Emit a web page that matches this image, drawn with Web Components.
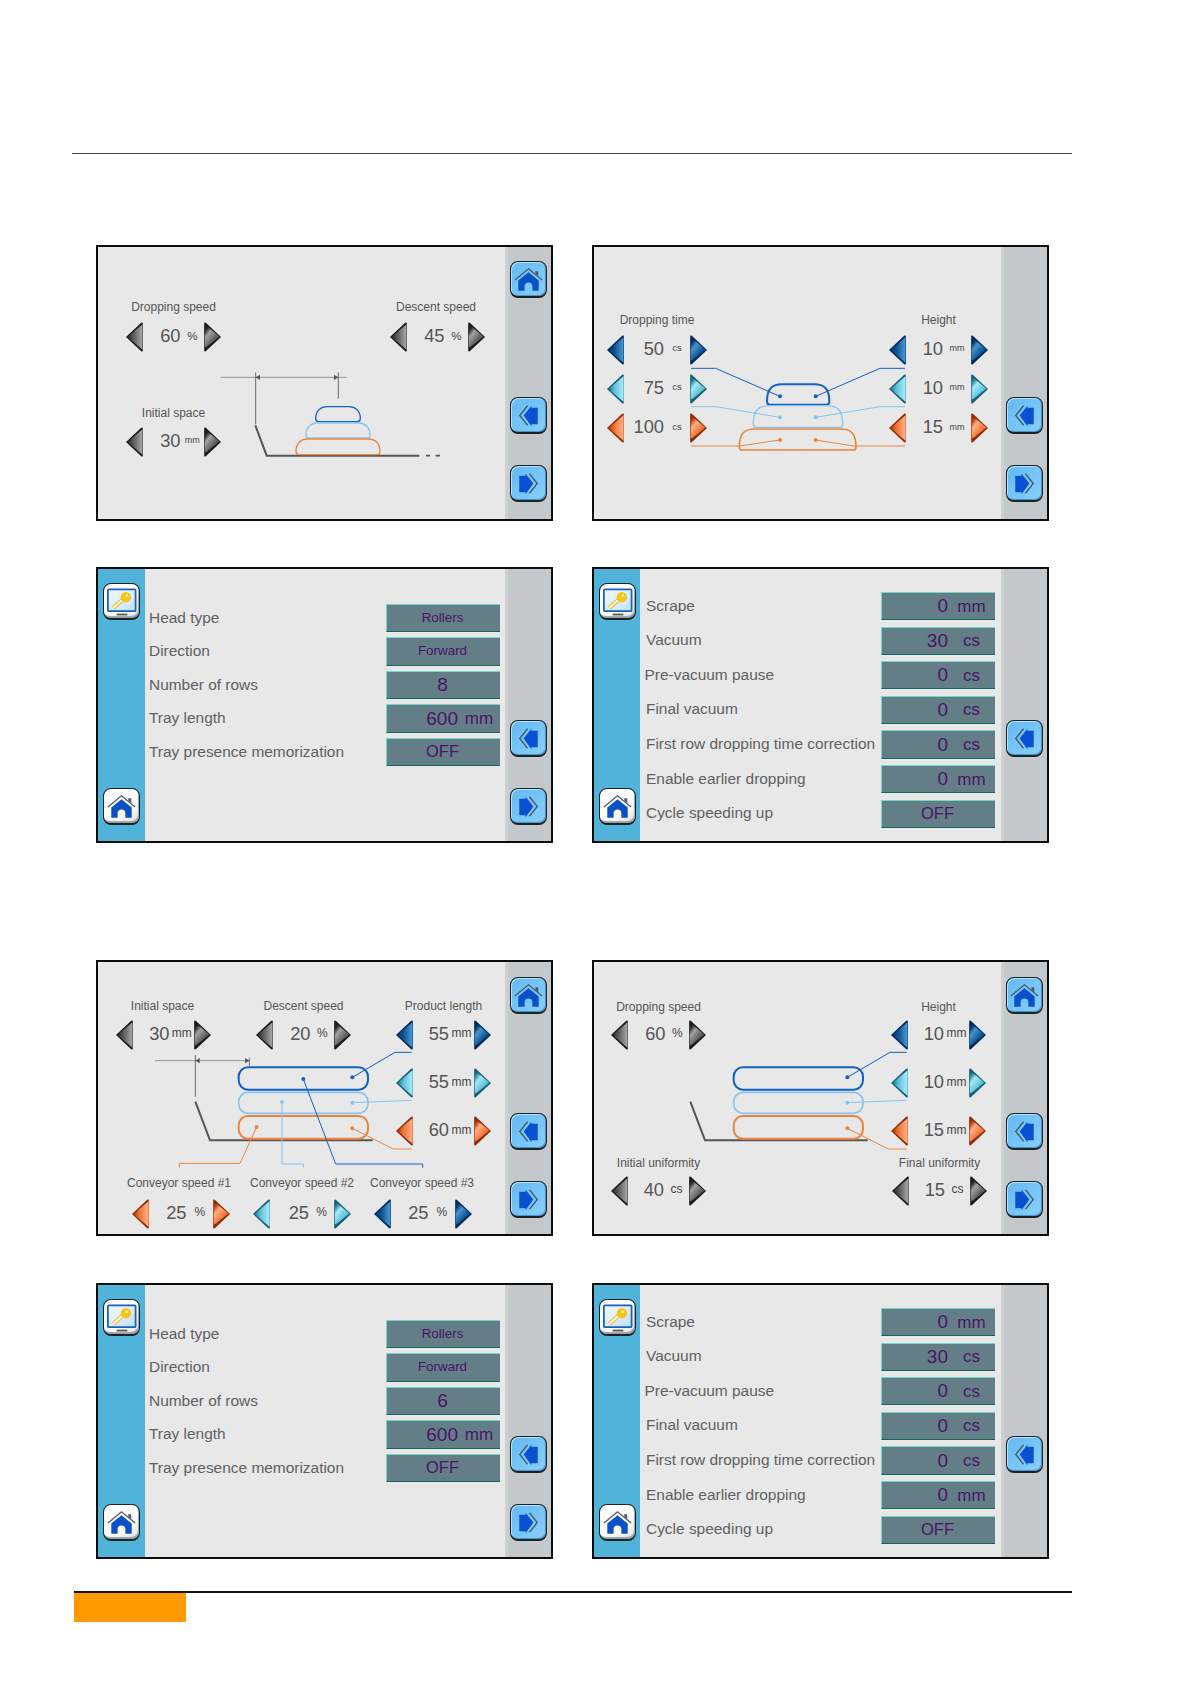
<!DOCTYPE html>
<html lang="en">
<head>
<meta charset="utf-8">
<title>Manual page</title>
<style>
  html, body { margin: 0; background: #fff; }
  body { font-family: "Liberation Sans", Arial, sans-serif; }
</style>
</head>
<body>
<manual-page>
  <screen-pair>
    <hmi-screen>
      <hmi-canvas col="left" kind="tower-small">
        <hmi-stepper x="28" y="75" label="Dropping speed" value="60" unit="%"></hmi-stepper>
        <hmi-stepper x="292" y="75" lx="-1.5" label="Descent speed" value="45" unit="%"></hmi-stepper>
        <hmi-stepper x="28" y="179.500" ly="13.5" label="Initial space" value="30" unit="mm" us="9"></hmi-stepper>
      </hmi-canvas>
      <hmi-rail slot="rail" buttons="home back next"></hmi-rail>
    </hmi-screen>
    <hmi-screen>
      <hmi-canvas col="right" kind="tower-wide">
        <hmi-stepper x="13" y="87.500" w="100" v="40" tone="blue" label="Dropping time" value="50" unit="cs" us="9.5"></hmi-stepper>
        <hmi-stepper x="13" y="126.500" w="100" v="40" tone="light" value="75" unit="cs" us="9.5"></hmi-stepper>
        <hmi-stepper x="13" y="166" w="100" v="40" tone="orange" value="100" unit="cs" us="9.5"></hmi-stepper>
        <hmi-stepper x="295" y="87.500" w="99" v="37" tone="blue" label="Height" value="10" unit="mm" us="9"></hmi-stepper>
        <hmi-stepper x="295" y="126.500" w="99" v="37" tone="light" value="10" unit="mm" us="9"></hmi-stepper>
        <hmi-stepper x="295" y="166" w="99" v="37" tone="orange" value="15" unit="mm" us="9"></hmi-stepper>
      </hmi-canvas>
      <hmi-rail slot="rail" buttons="back next"></hmi-rail>
    </hmi-screen>
    <hmi-screen>
      <hmi-side slot="side"></hmi-side>
      <setting-list style="--top:35px;--gap:5.2px;--pad:4px;--right:5px">
        <setting-row label="Head type" value="Rollers" size="13.4"></setting-row>
        <setting-row label="Direction" value="Forward" size="13.4"></setting-row>
        <setting-row label="Number of rows" value="8"></setting-row>
        <setting-row label="Tray length" value="600" unit="mm" col="71"></setting-row>
        <setting-row label="Tray presence memorization" value="OFF" size="16.5"></setting-row>
      </setting-list>
      <hmi-rail slot="rail" buttons="back next" low></hmi-rail>
    </hmi-screen>
    <hmi-screen>
      <hmi-side slot="side" style="--w:46px"></hmi-side>
      <setting-list style="--top:23px;--gap:6.3px;--pad:6px;--right:6px">
        <setting-row label="Scrape" value="0" unit="mm"></setting-row>
        <setting-row label="Vacuum" value="30" unit="cs"></setting-row>
        <setting-row label="Pre-vacuum pause" value="0" unit="cs" nudge="-1.5"></setting-row>
        <setting-row label="Final vacuum" value="0" unit="cs"></setting-row>
        <setting-row label="First row dropping time correction" value="0" unit="cs"></setting-row>
        <setting-row label="Enable earlier dropping" value="0" unit="mm"></setting-row>
        <setting-row label="Cycle speeding up" value="OFF" size="16.5"></setting-row>
      </setting-list>
      <hmi-rail slot="rail" buttons="back" low></hmi-rail>
    </hmi-screen>
  </screen-pair>

  <screen-pair style="margin-top:117px;--row-gap:47px">
    <hmi-screen>
      <hmi-canvas col="left" kind="flat-dim">
        <hmi-stepper x="18" y="58" ly="14.3" lx="-1" label="Initial space" value="30" unit="mm" us="12" v="36.500"></hmi-stepper>
        <hmi-stepper x="158" y="58" ly="14.3" label="Descent speed" value="20" unit="%" us="12"></hmi-stepper>
        <hmi-stepper x="298" y="58" ly="14.3" v="36" tone="blue" label="Product length" value="55" unit="mm" us="12"></hmi-stepper>
        <hmi-stepper x="298" y="106" v="36" tone="light" value="55" unit="mm" us="12"></hmi-stepper>
        <hmi-stepper x="298" y="154" v="36" tone="orange" value="60" unit="mm" us="12"></hmi-stepper>
        <hmi-stepper x="34" y="237" w="98" ly="15.6" lx="-2" tone="orange" label="Conveyor speed #1" value="25" unit="%" us="12"></hmi-stepper>
        <hmi-stepper x="155" y="237" w="98" v="39" ly="15.6" tone="light" label="Conveyor speed #2" value="25" unit="%" us="12"></hmi-stepper>
        <hmi-stepper x="276" y="237" w="98" ly="15.6" lx="-1" tone="blue" label="Conveyor speed #3" value="25" unit="%" us="12"></hmi-stepper>
      </hmi-canvas>
      <hmi-rail slot="rail" buttons="home back next" low></hmi-rail>
    </hmi-screen>
    <hmi-screen>
      <hmi-canvas col="right" kind="flat">
        <hmi-stepper x="17" y="58" ly="13.3" label="Dropping speed" value="60" unit="%" us="12"></hmi-stepper>
        <hmi-stepper x="297" y="58" ly="13.3" v="36" tone="blue" label="Height" value="10" unit="mm" us="12"></hmi-stepper>
        <hmi-stepper x="297" y="106" v="36" tone="light" value="10" unit="mm" us="12"></hmi-stepper>
        <hmi-stepper x="297" y="154" v="36" tone="orange" value="15" unit="mm" us="12"></hmi-stepper>
        <hmi-stepper x="17" y="214" ly="13.3" v="36" label="Initial uniformity" value="40" unit="cs" us="12"></hmi-stepper>
        <hmi-stepper x="298" y="214" ly="13.3" v="36" label="Final uniformity" value="15" unit="cs" us="12"></hmi-stepper>
      </hmi-canvas>
      <hmi-rail slot="rail" buttons="home back next" low></hmi-rail>
    </hmi-screen>
    <hmi-screen>
      <hmi-side slot="side"></hmi-side>
      <setting-list style="--top:35px;--gap:5.2px;--pad:4px;--right:5px">
        <setting-row label="Head type" value="Rollers" size="13.4"></setting-row>
        <setting-row label="Direction" value="Forward" size="13.4"></setting-row>
        <setting-row label="Number of rows" value="6"></setting-row>
        <setting-row label="Tray length" value="600" unit="mm" col="71"></setting-row>
        <setting-row label="Tray presence memorization" value="OFF" size="16.5"></setting-row>
      </setting-list>
      <hmi-rail slot="rail" buttons="back next" low></hmi-rail>
    </hmi-screen>
    <hmi-screen>
      <hmi-side slot="side" style="--w:46px"></hmi-side>
      <setting-list style="--top:23px;--gap:6.3px;--pad:6px;--right:6px">
        <setting-row label="Scrape" value="0" unit="mm"></setting-row>
        <setting-row label="Vacuum" value="30" unit="cs"></setting-row>
        <setting-row label="Pre-vacuum pause" value="0" unit="cs" nudge="-1.5"></setting-row>
        <setting-row label="Final vacuum" value="0" unit="cs"></setting-row>
        <setting-row label="First row dropping time correction" value="0" unit="cs"></setting-row>
        <setting-row label="Enable earlier dropping" value="0" unit="mm"></setting-row>
        <setting-row label="Cycle speeding up" value="OFF" size="16.5"></setting-row>
      </setting-list>
      <hmi-rail slot="rail" buttons="back" low></hmi-rail>
    </hmi-screen>
  </screen-pair>
</manual-page>

<script>
const FONT = '"Liberation Sans", Arial, sans-serif'

// page frame: top rule, the screens, footer rule with the orange tab
class ManualPage extends HTMLElement {
  constructor() {
    super()
    this.attachShadow({ mode: 'open' })
  }
  connectedCallback() {
    this.shadowRoot.innerHTML = `
      <style>
        :host { display: block; width: 1191px; height: 1684px; box-sizing: border-box; padding-top: 153px; font-family: ${FONT}; }
        .top { height: 1px; margin: 0 119px 91px 72px; background: #444; }
        .bottom { height: 2px; margin: 32px 119px 0 74px; background: #111; }
        .tab { width: 112px; height: 29px; margin-left: 74px; background: #ff9900; }
      </style>
      <div class="top"></div>
      <slot></slot>
      <div class="bottom"></div>
      <div class="tab"></div>`
  }
}

class ScreenPair extends HTMLElement {
  constructor() {
    super()
    this.attachShadow({ mode: 'open' })
  }
  connectedCallback() {
    this.shadowRoot.innerHTML = `
      <style>
        :host { display: grid; grid-template-columns: 457px 457px; column-gap: 39px; row-gap: var(--row-gap, 46px); margin-left: 96px; }
      </style>
      <slot></slot>`
  }
}

// one touch screen: optional blue side bar, content, grey rail
class HmiScreen extends HTMLElement {
  constructor() {
    super()
    this.attachShadow({ mode: 'open' })
  }
  connectedCallback() {
    this.shadowRoot.innerHTML = `
      <style>
        :host { display: flex; box-sizing: border-box; width: 457px; height: 276px; border: 2px solid #0c0c0c; background: #e8e8e8; }
        .main { flex: 1; min-width: 0; position: relative; }
      </style>
      <slot name="side"></slot>
      <div class="main"><slot></slot></div>
      <slot name="rail"></slot>`
  }
}

class HmiSide extends HTMLElement {
  constructor() {
    super()
    this.attachShadow({ mode: 'open' })
  }
  connectedCallback() {
    this.shadowRoot.innerHTML = `
      <style>
        :host { display: flex; flex-direction: column; justify-content: space-between; box-sizing: border-box; width: var(--w, 47px); height: 272px; padding: 14px 0 16px 5px; background: #4fb3da; }
      </style>
      <hmi-button icon="key" skin="white"></hmi-button>
      <hmi-button icon="home" skin="white"></hmi-button>`
  }
}

class HmiRail extends HTMLElement {
  constructor() {
    super()
    this.attachShadow({ mode: 'open' })
  }
  render() {
    const buttons = (this.getAttribute('buttons') ?? '').split(' ')
    const low = this.hasAttribute('low')
    const show = name => buttons.includes(name) ? '' : 'style="visibility:hidden"'
    this.shadowRoot.innerHTML = `
      <style>
        :host { display: flex; flex-direction: column; gap: 31px; box-sizing: border-box; width: 46px; height: 272px; padding: ${low ? 15 : 14}px 0 ${low ? 16 : 17}px 5px; background: linear-gradient(90deg, #d0d2d3, #c5c8ca 12%); }
        .home { margin-bottom: auto; }
      </style>
      <hmi-button class="home" icon="home" ${show('home')}></hmi-button>
      <hmi-button icon="back" ${show('back')}></hmi-button>
      <hmi-button icon="next" ${show('next')}></hmi-button>`
  }
  connectedCallback() {
    this.render()
  }
}

// rounded glossy button with its icon
class HmiButton extends HTMLElement {
  constructor() {
    super()
    this.attachShadow({ mode: 'open' })
  }
  createIcon(icon) {
    if (icon === 'home') {
      return `
        <path d="M4 18.5 18 7 32 18.5" fill="none" stroke="#4e5a62" stroke-width="1.3"/>
        <path d="M25 9.5h3v5l-3-2.4z" fill="#4e5a62"/>
        <path d="M18 10.5 28.5 19v10.5H22V25a4 4 0 0 0-8 0v4.5H7.500V19z" fill="#0a50c6"/>`
    }
    if (icon === 'back') {
      return `
        <path d="M17 8 9 18l8 10" fill="none" stroke="#4e5a62" stroke-width="1.400"/>
        <path d="M13 18 21 8v2h6.500v17H21v2z" fill="#0a50d0"/>`
    }
    if (icon === 'next') {
      return `
        <path d="M19 8l8 10-8 10" fill="none" stroke="#4e5a62" stroke-width="1.400"/>
        <path d="M23 18 15 8v2H8.500v17H15v2z" fill="#0a50d0"/>`
    }
    return `
      <defs><linearGradient id="scr" x1="0" y1="0" x2="1" y2="1"><stop offset="0" stop-color="#f4fbff"/><stop offset="1" stop-color="#bfe2fa"/></linearGradient></defs>
      <rect x="4" y="5.500" width="28.500" height="22.500" rx="1" fill="url(#scr)" stroke="#1a5ec0" stroke-width="1.800"/>
      <rect x="13" y="30.500" width="11" height="1.800" fill="#555"/>
      <path d="M21 14.500 9.500 24.500" stroke="#e8bc40" stroke-width="4.400" fill="none"/>
      <path d="M21 14.500 9.500 24.500" stroke="#fdf3c0" stroke-width="2.200" fill="none"/>
      <circle cx="22.500" cy="13.500" r="5.400" fill="#f6c41e"/>
      <circle cx="23.500" cy="12" r="1.200" fill="#fff2a8"/>`
  }
  render() {
    const icon = this.getAttribute('icon') ?? 'home'
    const white = this.getAttribute('skin') === 'white'
    const body = white
      ? 'background: linear-gradient(135deg, #fff 60%, #dfe3e5); box-shadow: inset -1px -2px 1px #9aa0a3;'
      : 'background: linear-gradient(135deg, #62baf5, #88d0fd); box-shadow: inset 1px 1px 0 #b4e2ff, inset -1px -1px 1px #4a90bf;'
    this.shadowRoot.innerHTML = `
      <style>
        :host { display: block; width: 37px; height: 37px; flex: none; }
        .btn { box-sizing: border-box; width: 100%; height: 100%; border: 1px solid #1c2226; border-right-width: 1.5px; border-bottom-width: 2px; border-radius: 8px; ${body} }
        svg { display: block; width: 35px; height: 35px; }
      </style>
      <div class="btn"><svg viewBox="0 0 36 36">${this.createIcon(icon)}</svg></div>`
  }
  connectedCallback() {
    this.render()
  }
}

// triangle for the +/- of a stepper: [edge, dark, bright, mid]
const TONES = {
  gray: ['#1a1a1a', '#2a2a2a', '#a2a2a2', '#5c5c5c'],
  blue: ['#002a5c', '#03386f', '#4a94cc', '#0c5494'],
  light: ['#155f74', '#2a8aa4', '#aae8f6', '#5cc2da'],
  orange: ['#8c2c08', '#c0450f', '#ffb088', '#f47434']
}

class HmiArrow extends HTMLElement {
  constructor() {
    super()
    this.attachShadow({ mode: 'open' })
  }
  render() {
    const right = this.getAttribute('dir') === 'right'
    const [edge, dark, bright, mid] = TONES[this.getAttribute('tone') ?? 'gray']
    const stops = right
      ? `<stop offset="0" stop-color="${edge}"/><stop offset=".12" stop-color="${dark}"/><stop offset=".32" stop-color="${bright}"/><stop offset=".7" stop-color="${mid}"/><stop offset="1" stop-color="${dark}"/>`
      : `<stop offset="0" stop-color="${edge}"/><stop offset=".45" stop-color="${mid}"/><stop offset=".92" stop-color="${bright}"/><stop offset="1" stop-color="${mid}"/>`
    const shape = right
      ? `<path d="M.2 1.500Q.2-.2 1.800.8L17 15 1.800 29.200Q.2 30.200.2 28.500z" fill="${edge}"/>
         <path d="M.8 2.500 15.500 14.500 3 24.500.8 25.500z" fill="url(#g)"/>`
      : `<path d="M16.800 1.500Q16.800-.2 15.200.8L0 15 15.200 29.200Q16.800 30.200 16.800 28.500z" fill="${edge}"/>
         <path d="M16.800 2 1.500 15 16.800 28z" fill="url(#g)"/>`
    this.shadowRoot.innerHTML = `
      <style>
        :host { display: block; width: 17px; height: 30px; }
        svg { display: block; }
      </style>
      <svg width="17" height="30" viewBox="0 0 17 30">
        <defs><linearGradient id="g" gradientUnits="userSpaceOnUse" x1="0" y1="${right ? 6 : 15}" x2="17" y2="${right ? 20 : 15}">${stops}</linearGradient></defs>
        ${shape}
      </svg>`
  }
  connectedCallback() {
    this.render()
  }
}

// label + left arrow + value + unit + right arrow, placed on the canvas of its screen
class HmiStepper extends HTMLElement {
  constructor() {
    super()
    this.attachShadow({ mode: 'open' })
  }
  render() {
    const x = +(this.getAttribute('x') ?? 0)
    const y = +(this.getAttribute('y') ?? 0)
    const w = +(this.getAttribute('w') ?? 95)
    const v = +(this.getAttribute('v') ?? 37.5)
    const ly = +(this.getAttribute('ly') ?? 15)
    const lx = +(this.getAttribute('lx') ?? 0)
    const us = this.getAttribute('us') ?? '11.5'
    const tone = this.getAttribute('tone') ?? 'gray'
    const label = this.getAttribute('label')
    const value = this.getAttribute('value') ?? ''
    const unit = this.getAttribute('unit') ?? ''
    const top = label ? y - 7 - ly : y
    this.shadowRoot.innerHTML = `
      <style>
        :host { position: absolute; left: ${x}px; top: ${top}px; width: ${w}px; display: flex; flex-direction: column; align-items: center; color: #555; font-family: ${FONT}; }
        .label { height: 14px; line-height: 14px; font-size: 12px; white-space: nowrap; margin-bottom: ${ly - 7}px; transform: translateX(${lx}px); }
        .row { display: grid; grid-template-columns: 17px ${v}px 1fr 17px; width: 100%; height: 30px; align-items: center; }
        .value { font-size: 18.3px; line-height: 30px; text-align: right; margin-top: -1.5px; white-space: nowrap; }
        .unit { font-size: ${us}px; line-height: 30px; text-align: center; margin-top: -3px; white-space: nowrap; color: #444; }
      </style>
      ${label ? `<div class="label">${label}</div>` : ''}
      <div class="row">
        <hmi-arrow dir="left" tone="${tone}"></hmi-arrow>
        <span class="value">${value}</span>
        <span class="unit">${unit}</span>
        <hmi-arrow dir="right" tone="${tone}"></hmi-arrow>
      </div>`
  }
  connectedCallback() {
    this.render()
  }
}

// diagram behind the steppers. Coordinates are 3x screen pixels, as read off the reference
const BLUE = '#1560c2', LIGHT = '#84c6f0', ORANGE = '#ee8440', DIM = '#6a6a6a', BED = '#555'

function dome(x1, x2, y1, y2, color, width) {
  const r = (y2 - y1) * 0.75
  return `<path d="M${x1 + 8} ${y2}H${x2 - 8}Q${x2} ${y2} ${x2} ${y2 - 10}C${x2} ${y1 + 12} ${x2 - 16} ${y1} ${x2 - r} ${y1}H${x1 + r}C${x1 + 16} ${y1} ${x1} ${y1 + 12} ${x1} ${y2 - 10}Q${x1} ${y2} ${x1 + 8} ${y2}Z" fill="none" stroke="${color}" stroke-width="${width}"/>`
}
function lead(points, color, width = 3) {
  return `<polyline points="${points}" fill="none" stroke="${color}" stroke-width="${width}"/>`
}
function dot(x, y, color) {
  return `<circle cx="${x}" cy="${y}" r="6" fill="${color}"/>`
}
function slab(y, h, color, width) {
  return `<rect x="446" y="${y}" width="388" height="${h}" rx="28" fill="none" stroke="${color}" stroke-width="${width}"/>`
}
function flatStack() {
  return lead('316,440 360,556 848,556', BED, 6)
    + slab(337, 67, BLUE, 6) + slab(412, 63, LIGHT, 5) + slab(483, 68, ORANGE, 6)
    + lead('787,367 915,292 965,292', BLUE) + dot(787, 367, BLUE)
    + lead('787,443 965,436', LIGHT) + dot(787, 443, LIGHT)
    + lead('787,520 910,582 965,582', ORANGE) + dot(787, 520, ORANGE)
}

const DIAGRAMS = {
  'tower-small': () =>
    lead('392,412 770,412', DIM, 2) + lead('497,397 497,553', DIM, 3) + lead('745,397 745,476', DIM, 3)
    + '<path d="M497 412l13-8v16zM745 412l-13-8v16z" fill="#555"/>'
    + lead('496,556 530,647 988,647', BED, 6)
    + '<path d="M1008 647h12M1037 647h13" stroke="#555" stroke-width="5"/>'
    + dome(677, 811, 500, 545, BLUE, 4) + dome(648, 840, 549, 594, LIGHT, 4) + dome(618, 870, 597, 644, ORANGE, 4),
  'tower-wide': () =>
    dome(546, 733, 433, 494, BLUE, 6) + dome(505, 773, 497, 562, LIGHT, 4) + dome(463, 813, 567, 630, ORANGE, 5)
    + lead('318,385 392,385 585,469', BLUE) + lead('960,385 885,385 692,469', BLUE)
    + dot(585, 469, BLUE) + dot(692, 469, BLUE)
    + lead('318,500 392,500 585,532', LIGHT) + lead('960,500 885,500 692,532', LIGHT)
    + dot(585, 532, LIGHT) + dot(692, 532, LIGHT)
    + lead('318,618 463,618 585,600', ORANGE) + lead('960,618 805,618 692,600', ORANGE)
    + dot(585, 600, ORANGE) + dot(692, 600, ORANGE),
  'flat-dim': () =>
    lead('195,317 480,317', DIM, 2) + lead('316,300 316,425', DIM, 3) + lead('478,308 478,332', DIM, 3)
    + '<path d="M316 317l13-8v16zM478 317l-13-8v16z" fill="#555"/>'
    + flatStack()
    + lead('640,372 737,627 998,627 998,638', BLUE) + dot(640, 372, BLUE)
    + lead('576,441 576,627 640,627 640,638', LIGHT) + dot(576, 441, LIGHT)
    + lead('500,516 450,625 268,625 268,638', ORANGE) + dot(500, 516, ORANGE),
  'flat': () => flatStack()
}

class HmiCanvas extends HTMLElement {
  constructor() {
    super()
    this.attachShadow({ mode: 'open' })
  }
  render() {
    const originX = this.getAttribute('col') === 'right' ? 27 : 24
    const kind = this.getAttribute('kind') ?? 'flat'
    this.shadowRoot.innerHTML = `
      <style>
        :host { display: block; position: relative; height: 272px; }
        svg { position: absolute; left: 0; top: 0; width: 407px; height: 272px; display: block; }
      </style>
      <svg viewBox="${originX} 21 1221 816">${DIAGRAMS[kind]()}</svg>
      <slot></slot>`
  }
  connectedCallback() {
    this.render()
  }
}

class SettingList extends HTMLElement {
  constructor() {
    super()
    this.attachShadow({ mode: 'open' })
  }
  connectedCallback() {
    this.shadowRoot.innerHTML = `
      <style>
        :host { display: flex; flex-direction: column; gap: var(--gap); height: 272px; box-sizing: border-box; padding: var(--top) var(--right) 0 var(--pad); }
      </style>
      <slot></slot>`
  }
}

// parameter name on the left, value box on the right
class SettingRow extends HTMLElement {
  constructor() {
    super()
    this.attachShadow({ mode: 'open' })
  }
  render() {
    const label = this.getAttribute('label') ?? ''
    const value = this.getAttribute('value') ?? ''
    const unit = this.getAttribute('unit')
    const size = this.getAttribute('size') ?? '19'
    const col = this.getAttribute('col') ?? '66'
    const nudge = this.getAttribute('nudge') ?? '0'
    const box = unit
      ? `<div class="box split"><span class="val">${value}</span><span class="unit">${unit}</span></div>`
      : `<div class="box"><span class="val">${value}</span></div>`
    this.shadowRoot.innerHTML = `
      <style>
        :host { display: grid; grid-template-columns: 1fr 114px; align-items: center; height: 28.3px; font-family: ${FONT}; }
        .label { font-size: 15.45px; color: #5f6062; white-space: nowrap; margin: -1px 0 0 ${nudge}px; }
        .box { box-sizing: border-box; height: 28.3px; display: flex; align-items: center; justify-content: center; padding-right: 2px; background: #647e88; border-style: solid; border-width: 1px 0 1.5px 1px; border-color: #74d8c8 #647e88 #10695e #74d8c8; color: #4a1565; }
        .split { display: grid; grid-template-columns: ${col}px 1fr; padding-right: 0; }
        .val { font-size: ${size}px; line-height: 1; margin-top: -1px; }
        .split .val { text-align: right; }
        .unit { font-size: 17px; text-align: center; margin-top: 1px; }
      </style>
      <span class="label">${label}</span>
      ${box}`
  }
  connectedCallback() {
    this.render()
  }
}

customElements.define('manual-page', ManualPage)
customElements.define('screen-pair', ScreenPair)
customElements.define('hmi-screen', HmiScreen)
customElements.define('hmi-side', HmiSide)
customElements.define('hmi-rail', HmiRail)
customElements.define('hmi-button', HmiButton)
customElements.define('hmi-arrow', HmiArrow)
customElements.define('hmi-stepper', HmiStepper)
customElements.define('hmi-canvas', HmiCanvas)
customElements.define('setting-list', SettingList)
customElements.define('setting-row', SettingRow)
</script>
</body>
</html>
